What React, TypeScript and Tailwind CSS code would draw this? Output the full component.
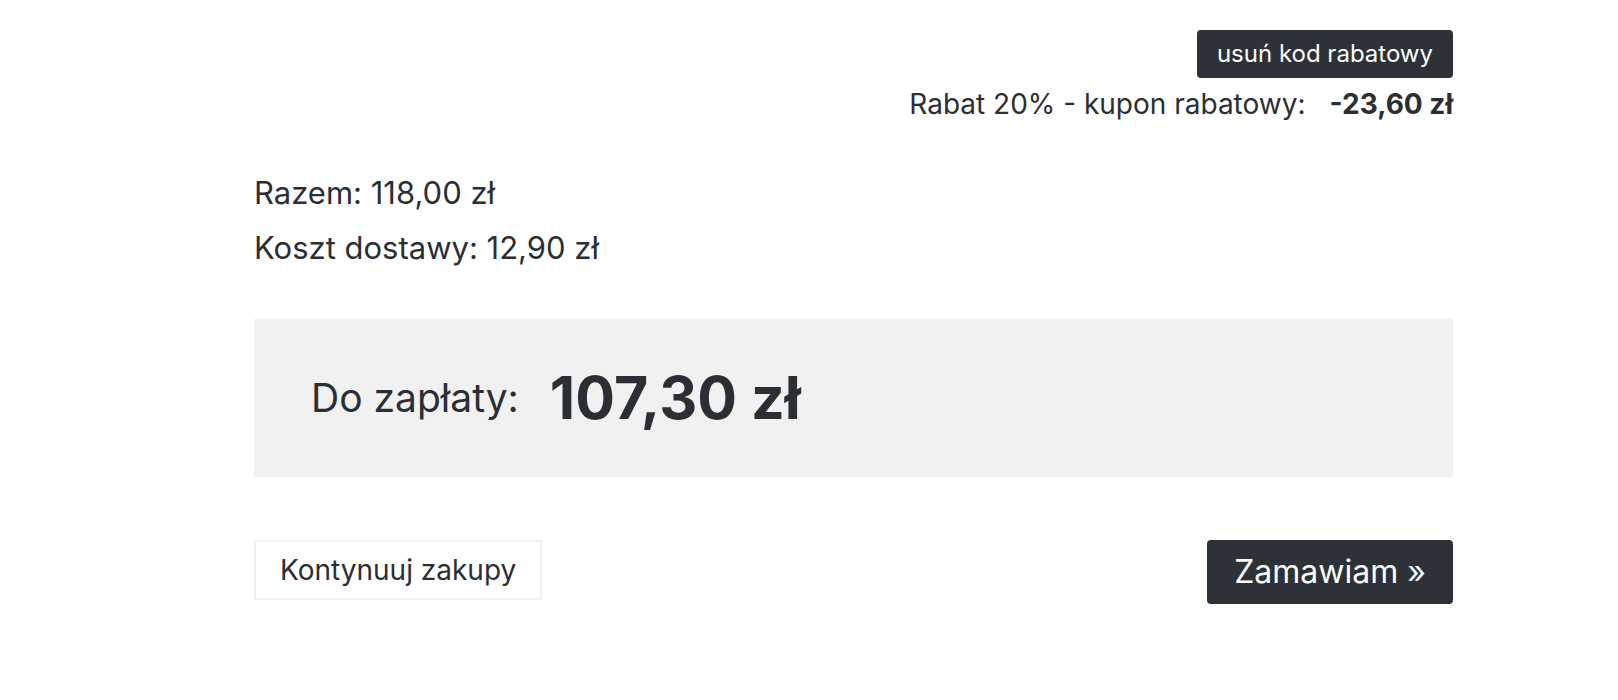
const App = () => {
    return (
        <div className="min-h-[700px] bg-white text-[#2b2e33] font-['Inter',sans-serif]">
            <div className="ml-[254px] w-[1199px] pt-[30px]">
                <div className="flex flex-col items-end">
                    <button className="h-[48px] px-[20px] rounded-[4px] bg-[#2d3138] text-white text-[24px]">
                        usuń kod rabatowy
                    </button>
                    <p className="mt-[6px] text-[28px] leading-[40px]">
                        Rabat 20% - kupon rabatowy:
                        <span className="ml-[24px] font-bold">-23,60 zł</span>
                    </p>
                </div>
                <div className="mt-[49px] flex flex-col gap-[15px] text-[31px] leading-[40px]">
                    <p>Razem: 118,00 zł</p>
                    <p>Koszt dostawy: 12,90 zł</p>
                </div>
                <div className="mt-[51px] h-[158px] bg-[#f1f1f2] flex items-center pl-[57px]">
                    <span className="text-[39px]">Do zapłaty:</span>
                    <span className="ml-[31px] text-[59px] font-bold">107,30 zł</span>
                </div>
                <div className="mt-[63px] flex justify-between items-start">
                    <button className="h-[60px] px-[24px] border-2 border-[#f0f0f0] bg-white text-[28px]">
                        Kontynuuj zakupy
                    </button>
                    <button className="h-[64px] w-[246px] rounded-[4px] bg-[#2d3138] text-white text-[32px]">
                        Zamawiam »
                    </button>
                </div>
            </div>
        </div>
    )
}

export default App
